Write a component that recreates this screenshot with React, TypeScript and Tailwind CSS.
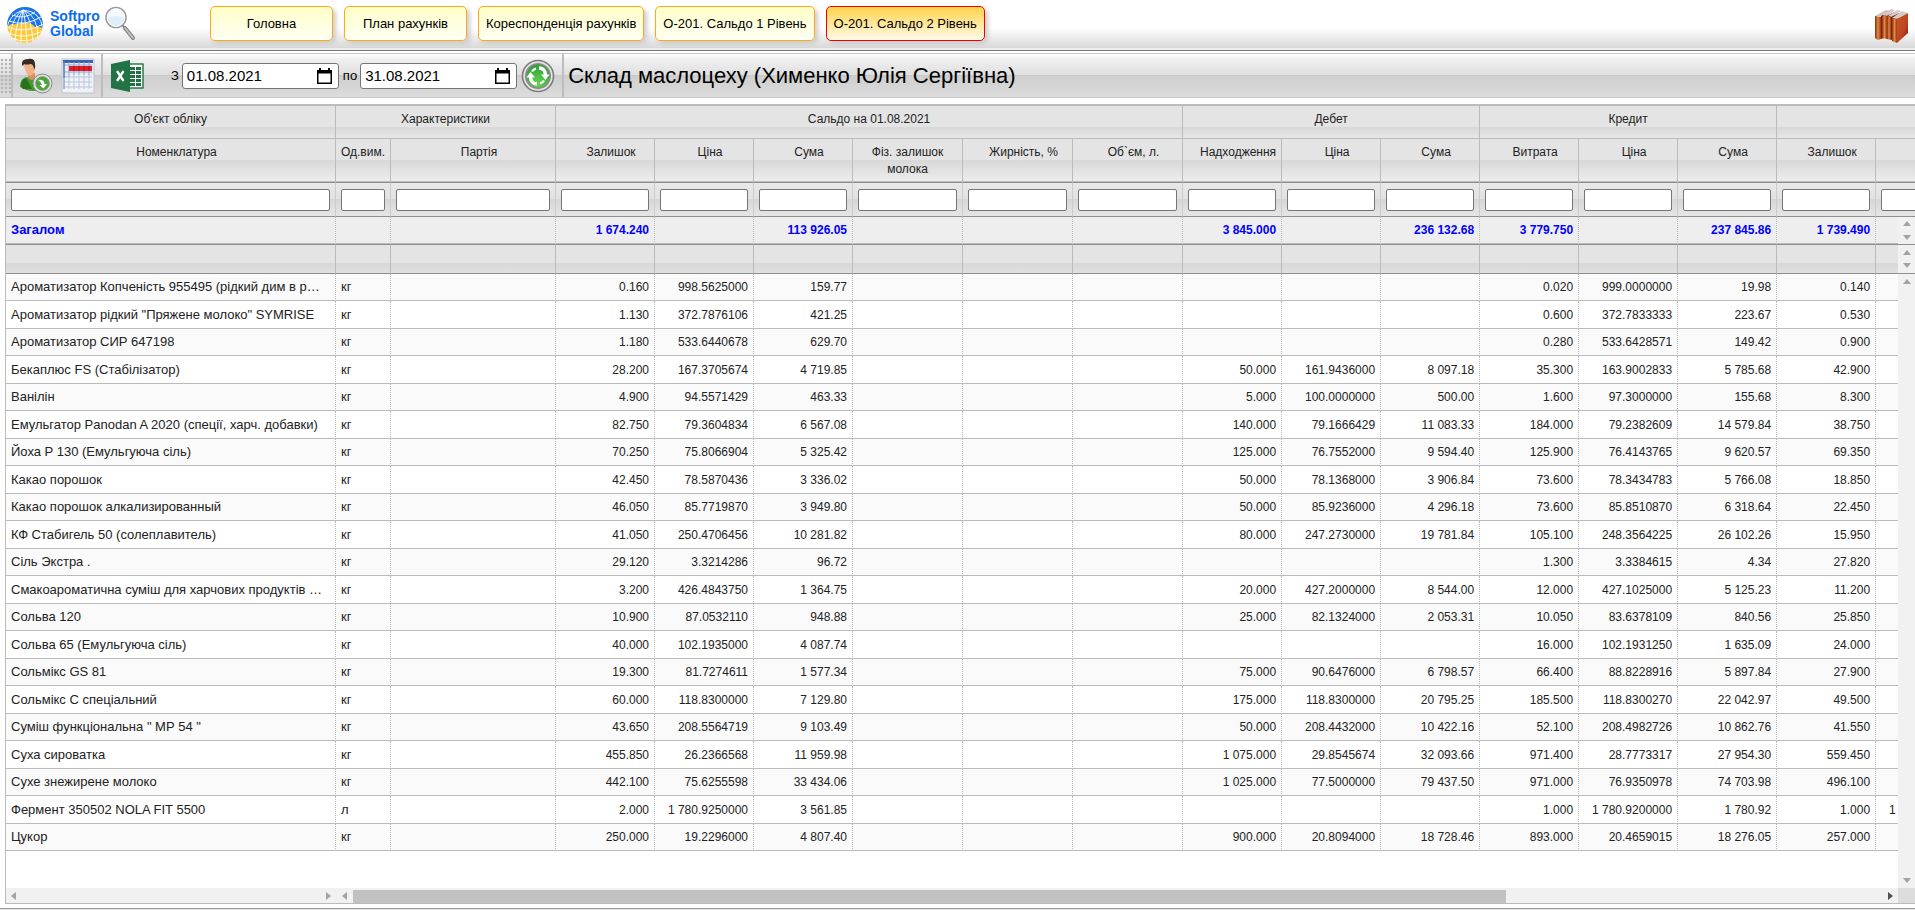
import { useState } from 'react'

type Row = {
  name: string
  unit: string
  start: [string, string, string]
  debit: [string, string, string]
  credit: [string, string, string]
  end: [string, string]
}

const NONE: [string, string, string] = ['', '', '']

const ROWS: Row[] = [
  { name: 'Ароматизатор Копченість 955495 (рідкий дим в р…', unit: 'кг', start: ['0.160', '998.5625000', '159.77'], debit: NONE, credit: ['0.020', '999.0000000', '19.98'], end: ['0.140', ''] },
  { name: 'Ароматизатор рідкий "Пряжене молоко" SYMRISE', unit: 'кг', start: ['1.130', '372.7876106', '421.25'], debit: NONE, credit: ['0.600', '372.7833333', '223.67'], end: ['0.530', ''] },
  { name: 'Ароматизатор СИР 647198', unit: 'кг', start: ['1.180', '533.6440678', '629.70'], debit: NONE, credit: ['0.280', '533.6428571', '149.42'], end: ['0.900', ''] },
  { name: 'Бекаплюс FS (Стабілізатор)', unit: 'кг', start: ['28.200', '167.3705674', '4 719.85'], debit: ['50.000', '161.9436000', '8 097.18'], credit: ['35.300', '163.9002833', '5 785.68'], end: ['42.900', ''] },
  { name: 'Ванілін', unit: 'кг', start: ['4.900', '94.5571429', '463.33'], debit: ['5.000', '100.0000000', '500.00'], credit: ['1.600', '97.3000000', '155.68'], end: ['8.300', ''] },
  { name: 'Емульгатор Panodan A 2020 (спеції, харч. добавки)', unit: 'кг', start: ['82.750', '79.3604834', '6 567.08'], debit: ['140.000', '79.1666429', '11 083.33'], credit: ['184.000', '79.2382609', '14 579.84'], end: ['38.750', ''] },
  { name: 'Йоха P 130 (Емульгуюча сіль)', unit: 'кг', start: ['70.250', '75.8066904', '5 325.42'], debit: ['125.000', '76.7552000', '9 594.40'], credit: ['125.900', '76.4143765', '9 620.57'], end: ['69.350', ''] },
  { name: 'Какао порошок', unit: 'кг', start: ['42.450', '78.5870436', '3 336.02'], debit: ['50.000', '78.1368000', '3 906.84'], credit: ['73.600', '78.3434783', '5 766.08'], end: ['18.850', ''] },
  { name: 'Какао порошок алкализированный', unit: 'кг', start: ['46.050', '85.7719870', '3 949.80'], debit: ['50.000', '85.9236000', '4 296.18'], credit: ['73.600', '85.8510870', '6 318.64'], end: ['22.450', ''] },
  { name: 'КФ Стабигель 50 (солеплавитель)', unit: 'кг', start: ['41.050', '250.4706456', '10 281.82'], debit: ['80.000', '247.2730000', '19 781.84'], credit: ['105.100', '248.3564225', '26 102.26'], end: ['15.950', ''] },
  { name: 'Сіль Экстра .', unit: 'кг', start: ['29.120', '3.3214286', '96.72'], debit: NONE, credit: ['1.300', '3.3384615', '4.34'], end: ['27.820', ''] },
  { name: 'Смакоароматична суміш для харчових продуктів …', unit: 'кг', start: ['3.200', '426.4843750', '1 364.75'], debit: ['20.000', '427.2000000', '8 544.00'], credit: ['12.000', '427.1025000', '5 125.23'], end: ['11.200', ''] },
  { name: 'Сольва 120', unit: 'кг', start: ['10.900', '87.0532110', '948.88'], debit: ['25.000', '82.1324000', '2 053.31'], credit: ['10.050', '83.6378109', '840.56'], end: ['25.850', ''] },
  { name: 'Сольва 65 (Емульгуюча сіль)', unit: 'кг', start: ['40.000', '102.1935000', '4 087.74'], debit: NONE, credit: ['16.000', '102.1931250', '1 635.09'], end: ['24.000', ''] },
  { name: 'Сольмікс GS 81', unit: 'кг', start: ['19.300', '81.7274611', '1 577.34'], debit: ['75.000', '90.6476000', '6 798.57'], credit: ['66.400', '88.8228916', '5 897.84'], end: ['27.900', ''] },
  { name: 'Сольмікс С спеціальний', unit: 'кг', start: ['60.000', '118.8300000', '7 129.80'], debit: ['175.000', '118.8300000', '20 795.25'], credit: ['185.500', '118.8300270', '22 042.97'], end: ['49.500', ''] },
  { name: 'Суміш функціональна " МР 54 "', unit: 'кг', start: ['43.650', '208.5564719', '9 103.49'], debit: ['50.000', '208.4432000', '10 422.16'], credit: ['52.100', '208.4982726', '10 862.76'], end: ['41.550', ''] },
  { name: 'Суха сироватка', unit: 'кг', start: ['455.850', '26.2366568', '11 959.98'], debit: ['1 075.000', '29.8545674', '32 093.66'], credit: ['971.400', '28.7773317', '27 954.30'], end: ['559.450', ''] },
  { name: 'Сухе знежирене молоко', unit: 'кг', start: ['442.100', '75.6255598', '33 434.06'], debit: ['1 025.000', '77.5000000', '79 437.50'], credit: ['971.000', '76.9350978', '74 703.98'], end: ['496.100', ''] },
  { name: 'Фермент 350502 NOLA FIT 5500', unit: 'л', start: ['2.000', '1 780.9250000', '3 561.85'], debit: NONE, credit: ['1.000', '1 780.9200000', '1 780.92'], end: ['1.000', '1 780.9300000'] },
  { name: 'Цукор', unit: 'кг', start: ['250.000', '19.2296000', '4 807.40'], debit: ['900.000', '20.8094000', '18 728.46'], credit: ['893.000', '20.4659015', '18 276.05'], end: ['257.000', ''] },
]

const TOTALS = ['Загалом', '', '', '1 674.240', '', '113 926.05', '', '', '', '3 845.000', '', '236 132.68', '3 779.750', '', '237 845.86', '1 739.490', '']

const GROUPS = [
  { label: "Об'єкт обліку", span: 1 },
  { label: 'Характеристики', span: 2 },
  { label: 'Сальдо на 01.08.2021', span: 6 },
  { label: 'Дебет', span: 3 },
  { label: 'Кредит', span: 3 },
  { label: '', span: 2 },
]

const COLUMNS = [
  { label: 'Номенклатура', width: 330, pad: 'pl-3' },
  { label: 'Од.вим.', width: 55, pad: '' },
  { label: 'Партія', width: 165, pad: 'pl-3' },
  { label: 'Залишок', width: 99, pad: 'pl-3' },
  { label: 'Ціна', width: 99, pad: 'pl-3' },
  { label: 'Сума', width: 99, pad: 'pl-3' },
  { label: 'Фіз. залишок молока', width: 110, pad: 'px-4' },
  { label: 'Жирність, %', width: 110, pad: 'pl-3' },
  { label: 'Об`єм, л.', width: 110, pad: 'pl-3' },
  { label: 'Надходження', width: 99, pad: 'pl-3' },
  { label: 'Ціна', width: 99, pad: 'pl-3' },
  { label: 'Сума', width: 99, pad: 'pl-3' },
  { label: 'Витрата', width: 99, pad: 'pl-3' },
  { label: 'Ціна', width: 99, pad: 'pl-3' },
  { label: 'Сума', width: 99, pad: 'pl-3' },
  { label: 'Залишок', width: 99, pad: 'pl-3' },
  { label: '', width: 99, pad: 'pl-3' },
]

const TABS = ['Головна', 'План рахунків', 'Кореспонденція рахунків', 'О-201. Сальдо 1 Рівень', 'О-201. Сальдо 2 Рівень']

function GlobeLogo() {
  return (
    <svg width="38" height="38" viewBox="0 0 38 38" fill="none" aria-hidden="true">
      <defs>
        <clipPath id="globeClip"><circle cx="19" cy="19" r="18" /></clipPath>
      </defs>
      <g clipPath="url(#globeClip)">
        <circle cx="19" cy="19" r="18" fill="#fcc93a" />
        <path d="M0 0H38V23Q34 20 29 21Q24 15 16 17Q8 19 5 18Q2 20 0 22Z" fill="#1a74ee" />
        <g stroke="#fff" strokeWidth="0.9" fill="none">
          <path d="M17 4Q3 9 1 22" />
          <path d="M17 4Q7 10 4 29" />
          <path d="M17 4Q11 12 9 34" />
          <path d="M17 4Q15 16 15 38" />
          <path d="M17 4Q20 16 21 38" />
          <path d="M17 4Q26 12 27 37" />
          <path d="M17 4Q32 9 32 32" />
          <path d="M17 4Q35 5 37 24" />
          <path d="M6 9Q18 14 29 6" />
          <path d="M3 15Q18 21 35 11" />
          <path d="M1 21Q18 28 38 18" />
          <path d="M2 27Q18 34 37 25" />
          <path d="M6 32Q19 38 33 31" />
        </g>
      </g>
    </svg>
  )
}

function MagnifierIcon() {
  return (
    <svg width="32" height="36" viewBox="0 0 32 36" fill="none" aria-hidden="true">
      <path d="M18 19L21 22" stroke="#888" strokeWidth="2" />
      <path d="M21 22L29 32" stroke="#808080" strokeWidth="4" strokeLinecap="round" />
      <path d="M21 22L29 32" stroke="#c4c4c4" strokeWidth="1.800" strokeLinecap="round" />
      <circle cx="12" cy="11.500" r="10" fill="#f4f9fd" stroke="#9a9a9a" strokeWidth="1.600" />
      <path d="M3 12Q12 8 21 12A9 9 0 0 1 3 12" fill="#e0eef8" />
      <circle cx="12" cy="11.500" r="8.800" stroke="#fff" strokeWidth="0.8" />
    </svg>
  )
}

function BooksIcon() {
  return (
    <svg width="38" height="36" viewBox="0 0 38 36" aria-hidden="true">
      <defs>
        <linearGradient id="spine" x1="0" y1="0" x2="1" y2="0">
          <stop offset="0" stopColor="#8a2a08" />
          <stop offset="0.5" stopColor="#e08a4a" />
          <stop offset="1" stopColor="#9c350c" />
        </linearGradient>
        <linearGradient id="cover" x1="0" y1="0" x2="1" y2="1">
          <stop offset="0" stopColor="#c65a1e" />
          <stop offset="0.6" stopColor="#bd4325" />
          <stop offset="1" stopColor="#7a1e08" />
        </linearGradient>
      </defs>
      <path d="M4 8L15 2L19 3L10 8.500Z" fill="#c9bfbc" />
      <path d="M10 8L18 4V28L10 31Z" fill="#7e2608" />
      <path d="M4 8L10 9V31L7 32L4 30Z" fill="url(#spine)" />
      <path d="M11 7L20 1L24 2L16 8Z" fill="#d4cbc8" />
      <path d="M16 8L23 4V28L16 31Z" fill="#7e2608" />
      <path d="M11 7L16 8V31L11 30Z" fill="url(#spine)" />
      <path d="M17 8L26 2L30 3L21 9Z" fill="#d4cbc8" />
      <path d="M20 9L28 5V28L20 32Z" fill="#7e2608" />
      <path d="M16 8L20 9V32L16 31Z" fill="url(#spine)" />
      <path d="M21 10L31 3L37 5L26 11Z" fill="#d4cbc8" />
      <path d="M26 11L37 5V25L26 35Z" fill="url(#cover)" />
      <path d="M21 10L26 11V35L21 33Z" fill="url(#spine)" />
    </svg>
  )
}

function UserIcon() {
  return (
    <svg width="34" height="36" viewBox="0 0 34 36" fill="none" aria-hidden="true">
      <path d="M1 29Q1 20 8 19L14 21L19 19Q24 21 24 31Q12 36 1 29Z" fill="#3f9a2c" />
      <path d="M2 28Q2 22 7 20L13 31H4Z" fill="#2d6f20" />
      <path d="M9 15H16V20Q13 24 9 20Z" fill="#d88f62" />
      <path d="M5 8Q5 3 11 3Q16 3 16 9Q16 17 11 18Q7 17 5 8Z" fill="#f0b289" />
      <path d="M3 7Q2 1 9 1Q16 0 16 6Q17 9 15 12Q15 7 12 6Q7 7 5 6L4 8Z" fill="#3a2a20" />
      <circle cx="23.500" cy="25.500" r="9.500" fill="#dedede" stroke="#8a8a8a" />
      <circle cx="23.500" cy="25.500" r="6.800" fill="#4aa63c" stroke="#5f8f58" strokeWidth="0.8" />
      <path d="M19 22Q25 21 25.500 26H28L24.500 30.500L20.500 27H23Q22.500 24 19 22Z" fill="#fff" />
    </svg>
  )
}

function CalendarGridIcon() {
  return (
    <svg width="34" height="36" viewBox="0 0 34 36" aria-hidden="true">
      <rect x="1" y="1" width="32" height="34" fill="#e9ecf2" stroke="#c2c6cf" />
      <rect x="2" y="2" width="30" height="3" fill="#3b62ad" />
      <path d="M8 4V31M13 4V31M18 4V31M23 4V31M28 4V31" stroke="#93a8d2" />
      <path d="M3 7H31M3 14H31M3 19H31M3 24H31M3 29H31" stroke="#93a8d2" />
      <rect x="8" y="8" width="23" height="5" fill="#e02028" />
      <path d="M13 8V13M18 8V13M23 8V13M28 8V13" stroke="#a81018" />
      <path d="M3 3V31" stroke="#5578b8" strokeWidth="1.5" />
      <path d="M2 20Q17 14 32 18V34H2Z" fill="#fff" opacity="0.35" />
    </svg>
  )
}

function ExcelIcon() {
  return (
    <svg width="33" height="32" viewBox="0 0 33 32" fill="none" aria-hidden="true">
      <rect x="17" y="4" width="15" height="24" fill="#fff" stroke="#217346" strokeWidth="1.4" />
      <g fill="#217346">
        <rect x="19" y="7" width="5" height="3" /><rect x="25" y="7" width="5" height="3" />
        <rect x="19" y="11" width="5" height="3" /><rect x="25" y="11" width="5" height="3" />
        <rect x="19" y="15" width="5" height="3" /><rect x="25" y="15" width="5" height="3" />
        <rect x="19" y="19" width="5" height="3" /><rect x="25" y="19" width="5" height="3" />
        <rect x="19" y="23" width="5" height="3" /><rect x="25" y="23" width="5" height="3" />
      </g>
      <path d="M0 4L19 0V32L0 28Z" fill="#217346" />
      <path d="M6 11L12.500 21M12.500 11L6 21" stroke="#fff" strokeWidth="2.3" />
    </svg>
  )
}

function RefreshIcon() {
  return (
    <svg width="34" height="34" viewBox="0 0 34 34" fill="none" aria-hidden="true">
      <defs>
        <radialGradient id="refresh" cx="0.5" cy="0.8" r="0.8">
          <stop offset="0" stopColor="#63d552" />
          <stop offset="1" stopColor="#2f9a38" />
        </radialGradient>
      </defs>
      <circle cx="17" cy="17" r="15.500" fill="#e2e2e2" stroke="#7c7c7c" strokeWidth="1.6" />
      <circle cx="17" cy="17" r="12.200" fill="url(#refresh)" stroke="#8c8c8c" strokeWidth="1.6" />
      <path d="M18 9Q24 9 24.500 16" stroke="#fff" strokeWidth="3.400" />
      <path d="M20 15.500H28.500L24.500 21Z" fill="#fff" />
      <path d="M16 25Q10 25 9.500 18" stroke="#fff" strokeWidth="3.400" />
      <path d="M5.500 18.500H14L9.500 13Z" fill="#fff" />
      <path d="M10 12Q11.500 9 15 8.500V11Q13 11 12 13Z" fill="#fff" />
      <path d="M24 22Q22.500 25 19 25.500V23Q21 23 22 21Z" fill="#fff" />
    </svg>
  )
}

function Arrow({ dir, dark }: { dir: 'up' | 'down' | 'left' | 'right'; dark?: boolean }) {
  const d = {
    up: 'M0 6L4 1L8 6Z',
    down: 'M0 2L4 7L8 2Z',
    left: 'M6 0L1 4L6 8Z',
    right: 'M2 0L7 4L2 8Z',
  }[dir]
  return (
    <svg width="8" height="8" viewBox="0 0 8 8" className={dark ? 'fill-[#505050]' : 'fill-[#a3a3a3]'} aria-hidden="true">
      <path d={d} />
    </svg>
  )
}

function DateField({ id, label, value, onChange }: { id: string; label: string; value: string; onChange: (v: string) => void }) {
  return (
    <div className="flex items-center gap-[3px]">
      <label htmlFor={id} className="text-[13px]">{label}</label>
      <div className="flex h-[26px] w-[157px] items-center rounded-[3px] border border-[#767676] bg-white pr-1.5 pl-1">
        <input
          id={id}
          value={value}
          onChange={e => onChange(e.target.value)}
          className="min-w-0 flex-1 text-[15px] leading-5 outline-none"
        />
        <svg width="15" height="16" viewBox="0 0 15 16" aria-hidden="true">
          <path d="M0 2H2V0H4V2H11V0H13V2H15V16H0ZM1.500 5.500V14.500H13.500V5.500Z" fillRule="evenodd" />
        </svg>
      </div>
    </div>
  )
}

function DataRow({ row }: { row: Row }) {
  const cells = ['', ...row.start, '', '', '', ...row.debit, ...row.credit, ...row.end]
  const td = 'border-b border-[#bbb] border-r border-r-[#bbb] px-[5px] py-0 [border-right-style:dotted]'
  return (
    <tr className="h-7 bg-white odd:h-[27px] odd:bg-[#fafafa]">
      <td className={`${td} truncate text-[13px]`}>{row.name}</td>
      <td className={`${td} text-[13px]`}>{row.unit}</td>
      {cells.map((cell, i) => (
        <td key={i} className={`${td} text-right text-xs whitespace-nowrap`}>{cell}</td>
      ))}
    </tr>
  )
}

export default function App() {
  const [active, setActive] = useState(4)
  const [from, setFrom]     = useState('01.08.2021')
  const [to, setTo]         = useState('31.08.2021')

  return (
    <div className="flex h-screen flex-col overflow-hidden bg-white font-['Liberation_Sans',Arial,sans-serif] text-black">
      <header className="flex h-[51px] shrink-0 border-b border-[#777] bg-[#f0eeec] pb-0.5">
        <div className="flex flex-1 items-start bg-[linear-gradient(#fff_58%,#d9d9d9)] pt-1.5">
          <a href="#" className="flex w-[210px] items-start pl-1.5 text-[#0b6cf0]">
            <GlobeLogo />
            <span className="ml-1.5 w-[54px] pt-[3px] text-sm leading-[15px] font-bold">Softpro Global</span>
            <MagnifierIcon />
          </a>
          <nav className="flex gap-[11px]">
            {TABS.map((tab, i) => (
              <button
                key={tab}
                onClick={() => setActive(i)}
                className={`h-[35px] min-w-[123px] rounded-[5px] border px-[7px] text-[13px] shadow-[3px_3px_5px_#ccc] ${
                  i === active
                    ? 'border-[#f00000] bg-[linear-gradient(#ffd34a,#fffaea)]'
                    : 'border-[#ffa81c] bg-[linear-gradient(#ffffc8,#fffff4)]'
                }`}
              >
                {tab}
              </button>
            ))}
          </nav>
          <button aria-label="Довідка" className="mr-1.5 ml-auto pt-0.5"><BooksIcon /></button>
        </div>
      </header>

      <div className="mt-0.5 flex h-[45px] shrink-0 items-center border-y border-[#c8c8c8] bg-[linear-gradient(#fff,#f0f0f0_12%,#dfdfdf_49%,#c8c8c8_49%,#cfcfcf_53%,#dcdcdc)]">
        <div className="h-9 w-[11px] bg-[radial-gradient(#b4b4b4_1px,transparent_1px)] bg-[length:4px_4px]" />
        <div className="flex h-[43px] items-center gap-2 border-x-2 border-[#bdbdbd] pr-1.5 pl-1.5">
          <button aria-label="Користувач"><UserIcon /></button>
          <button aria-label="Календар"><CalendarGridIcon /></button>
        </div>
        <button aria-label="Excel" className="ml-2"><ExcelIcon /></button>
        <div className="ml-[27px] flex items-center gap-1">
          <DateField id="from" label="З" value={from} onChange={setFrom} />
          <DateField id="to" label="по" value={to} onChange={setTo} />
          <button aria-label="Оновити"><RefreshIcon /></button>
        </div>
        <div className="ml-[7px] flex h-[43px] items-center border-l-2 border-[#bdbdbd] pl-1">
          <h1 className="text-[22px] leading-7 whitespace-nowrap">Склад маслоцеху (Хименко Юлія Сергіївна)</h1>
        </div>
      </div>

      <main className="relative mt-1.5 mb-1 ml-[5px] flex min-h-0 flex-1 flex-col border-t-2 border-b border-l border-[#bbb]">
        <div className="min-h-0 flex-1 overflow-hidden">
          <table className="w-[1969px] table-fixed border-separate border-spacing-0 text-[#222]">
            <colgroup>
              {COLUMNS.map((col, i) => <col key={i} style={{ width: col.width }} />)}
            </colgroup>
            <thead className="text-xs leading-[17px]">
              <tr className="h-[33px]">
                {GROUPS.map((g, i) => (
                  <th key={i} colSpan={g.span} className="border-r border-b border-[#bbb] bg-[linear-gradient(#e4e4e4_66%,#d8d8d8_66%,#e6e6e6)] p-0 pt-[5px] align-top font-normal">
                    {g.label}
                  </th>
                ))}
              </tr>
              <tr className="h-[43px]">
                {COLUMNS.map((col, i) => (
                  <th key={i} className={`border-r border-b border-[#bbb] bg-[linear-gradient(#e4e4e4_50%,#d8d8d8_50%,#ececec)] py-0 pt-[5px] align-top font-normal ${col.pad}`}>
                    {col.label}
                  </th>
                ))}
              </tr>
              <tr className="h-[35px]">
                {COLUMNS.map((col, i) => (
                  <td key={i} className="border-y border-r border-y-[#8f8f8f] border-r-[#ccc] bg-[linear-gradient(#e8e8e8,#e2e2e2_48%,#d6d6d6_48%,#e6e6e6)] px-[5px] py-0">
                    <input
                      aria-label={col.label}
                      className="block h-[22px] w-full rounded-xs border border-[#767676] bg-white px-1 text-xs outline-none"
                    />
                  </td>
                ))}
              </tr>
            </thead>
            <tbody>
              <tr className="h-[27px] font-bold text-[#0000ff]">
                {TOTALS.map((cell, i) => (
                  <td
                    key={i}
                    className={`border-r border-b border-[#bbb] bg-[#eee] px-[5px] py-0 whitespace-nowrap [border-right-style:dotted] ${i === 0 ? 'text-[13px]' : 'text-right text-xs'}`}
                  >
                    {cell}
                  </td>
                ))}
              </tr>
              <tr className="h-[30px]">
                {COLUMNS.map((_, i) => (
                  <td key={i} className="border-y border-r border-y-[#8f8f8f] border-r-[#bbb] bg-[linear-gradient(#e4e4e4_66%,#d8d8d8_66%,#e0e0e0)] p-0" />
                ))}
              </tr>
            </tbody>
            <tbody>
              {ROWS.map(row => <DataRow key={row.name} row={row} />)}
            </tbody>
          </table>
        </div>

        <div className="flex h-[15px] shrink-0 items-center bg-[#f1f1f1]">
          <div className="flex w-[330px] justify-between px-1">
            <Arrow dir="left" />
            <Arrow dir="right" />
          </div>
          <div className="flex h-full min-w-0 flex-1 items-center">
            <div className="flex w-[17px] shrink-0 justify-center"><Arrow dir="left" /></div>
            <div className="flex h-full flex-1 pt-0.5">
              <div className="h-full flex-77 bg-[#c1c1c1]" />
              <div className="flex-25" />
            </div>
            <div className="flex w-[17px] shrink-0 justify-center"><Arrow dir="right" dark /></div>
          </div>
          <div className="h-full w-[17px] bg-[#dcdcdc]" />
        </div>

        <div className="absolute top-[111px] right-0 bottom-[15px] flex w-[17px] flex-col bg-[#f1f1f1]">
          <div className="flex h-[27px] flex-col items-center justify-between py-[3px]">
            <Arrow dir="up" />
            <Arrow dir="down" />
          </div>
          <div className="flex h-[30px] flex-col items-center justify-between border-y border-[#8f8f8f] py-1">
            <Arrow dir="up" />
            <Arrow dir="down" />
          </div>
          <div className="flex flex-1 flex-col items-center justify-between py-1">
            <Arrow dir="up" />
            <Arrow dir="down" />
          </div>
        </div>
      </main>
      <footer className="h-0.5 shrink-0 border-t border-[#999] bg-[#e2e2e2]" />
    </div>
  )
}
